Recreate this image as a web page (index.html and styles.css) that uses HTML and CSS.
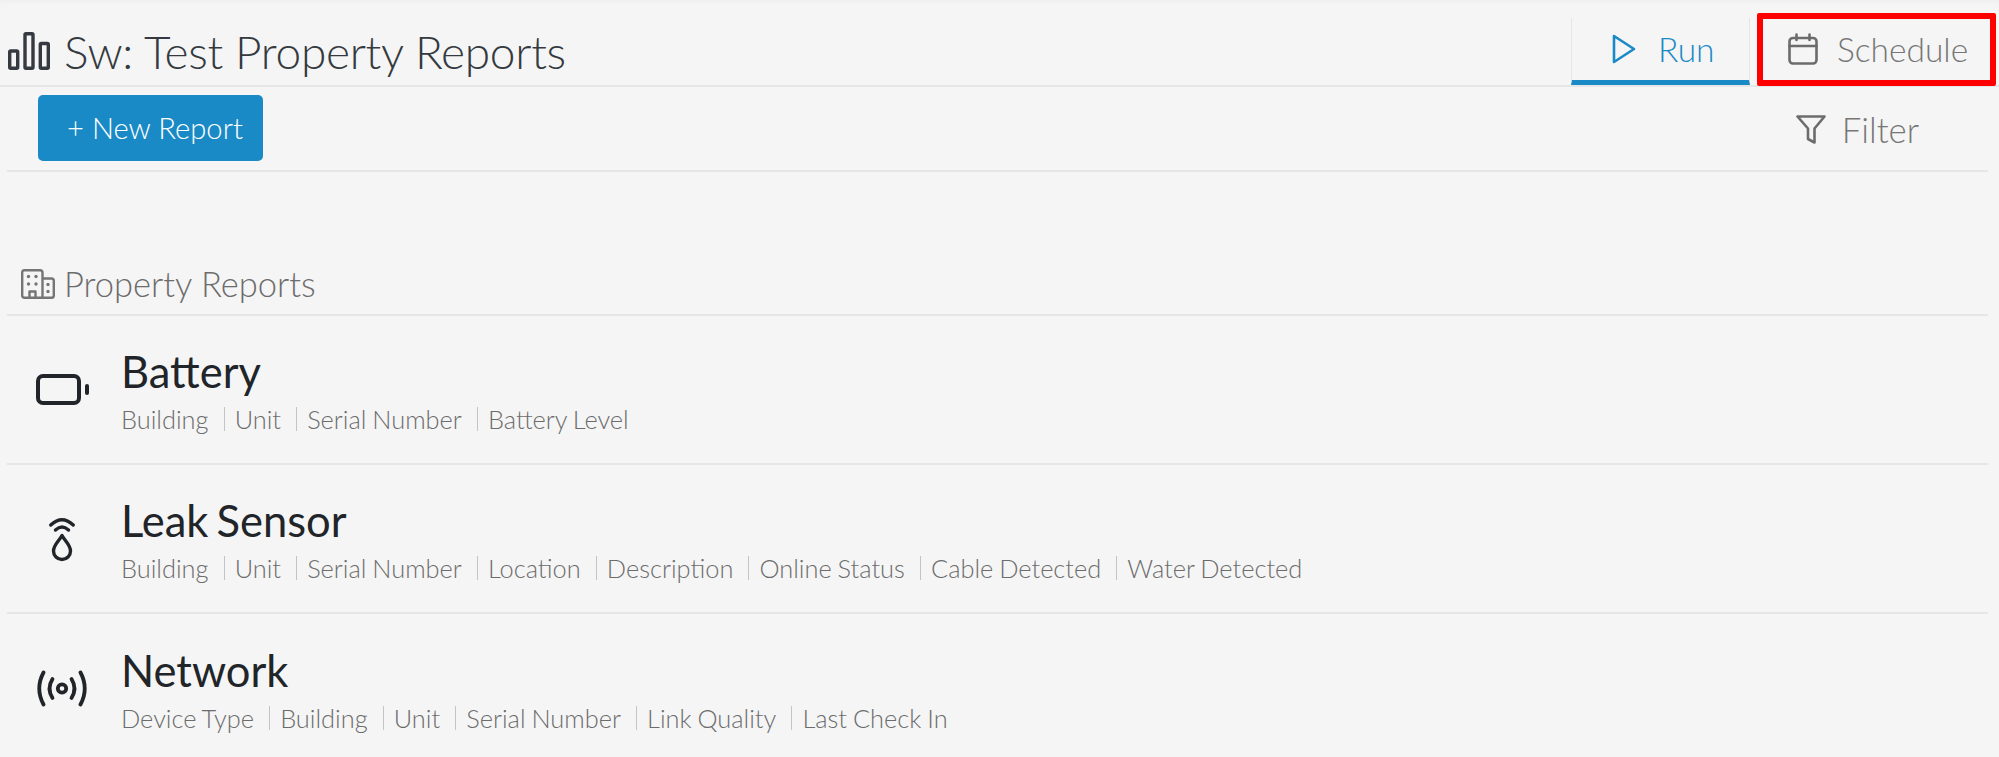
FILE: index.html
```html
<!DOCTYPE html>
<html>
<head>
<meta charset="utf-8">
<title>Sw: Test Property Reports</title>
<link rel="stylesheet" href="styles.css">
</head>
<body>
<div class="header">
  <div class="page-title">
    <svg class="title-icon" viewBox="0 0 42 38" fill="none" stroke="#343a40" stroke-width="3.4" stroke-linejoin="round">
      <rect x="1.7" y="19" width="8" height="17.3" rx="1"/>
      <rect x="17" y="1.7" width="8" height="34.6" rx="1"/>
      <rect x="32.3" y="11.5" width="8" height="24.8" rx="1"/>
    </svg>
    <h1>Sw: Test Property Reports</h1>
  </div>
  <div class="tabs">
    <a class="tab active">
      <svg class="tab-icon run-icon" viewBox="0 0 24 30" fill="none" stroke="#1a8ac6" stroke-width="2.6" stroke-linejoin="round">
        <path d="M2 2 L22 15 L2 28 Z"/>
      </svg>
      Run
    </a>
    <a class="tab schedule">
      <svg class="tab-icon cal-icon" viewBox="0 0 30 32" fill="none" stroke="#6c6c6c" stroke-width="2.6" stroke-linecap="round" stroke-linejoin="round">
        <rect x="1.5" y="5" width="27" height="25.5" rx="3.5"/>
        <path d="M1.5 13 H28.5 M8.5 1.5 V7 M21.5 1.5 V7"/>
      </svg>
      Schedule
      <span class="highlight"></span>
    </a>
  </div>
</div>

<div class="toolbar">
  <button class="new-report">+ New Report</button>
  <a class="filter">
    <svg class="filter-icon" viewBox="0 0 30 29" fill="none" stroke="#6c6c6c" stroke-width="2.6" stroke-linejoin="round">
      <path d="M1.5 1.5 H28.5 L18.5 13.5 V27.5 L12 24 V13.5 Z"/>
    </svg>
    Filter
  </a>
</div>

<div class="section-title">
  <svg class="building-icon" viewBox="0 0 34 30" fill="none" stroke="#757575" stroke-width="2.4" stroke-linejoin="round">
    <path d="M3.5 1.2 H19 Q21.5 1.2 21.5 3.7 V28.8 H3.5 Q1.2 28.8 1.2 26.5 V3.7 Q1.2 1.2 3.5 1.2 Z"/>
    <path d="M21.5 9.5 H30.5 Q32.8 9.5 32.8 12 V26.5 Q32.8 28.8 30.5 28.8 H21.5"/>
    <path d="M8.5 28.8 V22.5 H14.5 V28.8"/>
    <g fill="#757575" stroke="none">
      <circle cx="7.5" cy="7.5" r="1.7"/><circle cx="15" cy="7.5" r="1.7"/>
      <circle cx="7.5" cy="15" r="1.7"/><circle cx="15" cy="15" r="1.7"/>
      <circle cx="27" cy="15.5" r="1.7"/><circle cx="27" cy="22.5" r="1.7"/>
    </g>
  </svg>
  Property Reports
</div>

<div class="report-row">
  <div class="report-icon">
    <svg class="battery-icon" viewBox="0 0 53 31" fill="none" stroke="#212529" stroke-width="4">
      <rect x="2" y="2" width="41" height="27" rx="5"/>
      <path d="M51 12 V19" stroke-linecap="round"/>
    </svg>
  </div>
  <div class="report-text">
    <h3>Battery</h3>
    <div class="fields"><span>Building</span><span>Unit</span><span>Serial Number</span><span>Battery Level</span></div>
  </div>
</div>

<div class="report-row">
  <div class="report-icon">
    <svg class="leak-icon" viewBox="0 0 26 46" fill="none" stroke="#212529" stroke-width="3.4" stroke-linecap="round">
      <path d="M1.8 9 Q13 -1.5 24.2 9"/>
      <path d="M6.5 14 Q13 8 19.5 14"/>
      <path d="M13 19.5 C16 25 21.5 29 21.5 35 A8.5 8.5 0 0 1 4.5 35 C4.5 29 10 25 13 19.5 Z" stroke-linejoin="round"/>
    </svg>
  </div>
  <div class="report-text">
    <h3>Leak Sensor</h3>
    <div class="fields"><span>Building</span><span>Unit</span><span>Serial Number</span><span>Location</span><span>Description</span><span>Online Status</span><span>Cable Detected</span><span>Water Detected</span></div>
  </div>
</div>

<div class="report-row">
  <div class="report-icon">
    <svg class="network-icon" viewBox="0 0 50 37" fill="none" stroke="#212529" stroke-width="3.8" stroke-linecap="round">
      <circle cx="25" cy="18.5" r="4.2"/>
      <path d="M15.5 9 Q9.5 18.5 15.5 28 M34.5 9 Q40.5 18.5 34.5 28"/>
      <path d="M6.5 2.5 Q-2 18.5 6.5 34.5 M43.5 2.5 Q52 18.5 43.5 34.5"/>
    </svg>
  </div>
  <div class="report-text">
    <h3>Network</h3>
    <div class="fields"><span>Device Type</span><span>Building</span><span>Unit</span><span>Serial Number</span><span>Link Quality</span><span>Last Check In</span></div>
  </div>
</div>
</body>
</html>
```

FILE: styles.css
```css
html, body {
  margin: 0;
  padding: 0;
}

body {
  background: #f5f5f5;
  font-family: Lato, "Open Sans", sans-serif;
  color: #212529;
  height: 757px;
  overflow: hidden;
}

.header {
  display: flex;
  justify-content: space-between;
  align-items: flex-end;
  height: 85px;
  border-bottom: 2px solid #e6e6e6;
  padding-left: 8px;
  box-shadow: inset 0 4px 4px -2px #eeeeee;
}

.page-title {
  display: flex;
  align-items: center;
  height: 70px;
  margin-bottom: -2px;
}

.title-icon {
  width: 42px;
  height: 38px;
  margin-right: 14px;
  margin-bottom: 2px;
}

h1 {
  margin: 0;
  font-size: 46px;
  font-weight: 300;
  letter-spacing: -0.3px;
  color: #343a40;
  line-height: 54px;
}

.tabs {
  display: flex;
  height: 67px;
  margin-right: 3px;
}

.tab {
  display: flex;
  align-items: center;
  box-sizing: border-box;
  font-size: 33.5px;
  font-weight: 300;
  position: relative;
}

.tab.active {
  width: 179px;
  padding-left: 40px;
  color: #1a8ac6;
  border-left: 1px solid #e6e6e6;
  border-right: 1px solid #e6e6e6;
  border-bottom: 5px solid #1a8ac6;
  margin-right: 7px;
}

.tab.schedule {
  width: 239px;
  padding-left: 31px;
  padding-bottom: 5px;
  color: #777;
}

.tab-icon {
  flex: none;
}

.run-icon {
  width: 24px;
  height: 30px;
  margin-right: 22px;
}

.cal-icon {
  width: 30px;
  height: 32px;
  margin-right: 19px;
}

.highlight {
  position: absolute;
  left: 0;
  right: 0;
  top: -5px;
  bottom: -1px;
  border: 6px solid #ff0000;
  border-radius: 2px;
}

.toolbar {
  display: flex;
  justify-content: space-between;
  align-items: center;
  height: 85px;
  margin: 0 11px 0 7px;
  padding: 0 69px 0 31px;
  border-bottom: 2px solid #e6e6e6;
  box-sizing: border-box;
}

.new-report {
  width: 225px;
  height: 66px;
  margin-top: -1px;
  background: #1a8ac6;
  color: #fff;
  border: none;
  border-radius: 5px;
  font-family: inherit;
  font-size: 29.2px;
  font-weight: 300;
  padding: 0 0 2px 9px;
}

.filter {
  display: flex;
  align-items: center;
  font-size: 34.8px;
  font-weight: 300;
  color: #777;
  padding-top: 2px;
}

.filter-icon {
  width: 30px;
  height: 29px;
  margin-right: 16px;
}

.section-title {
  display: flex;
  align-items: center;
  height: 61px;
  margin: 83px 11px 0 7px;
  padding: 0 0 2px 14px;
  font-size: 34.5px;
  font-weight: 300;
  color: #6c6c6c;
  border-bottom: 2px solid #e6e6e6;
  box-sizing: border-box;
}

.building-icon {
  width: 34px;
  height: 30px;
  margin-right: 9px;
}

.report-row {
  display: flex;
  align-items: center;
  height: 149px;
  margin: 0 11px 0 7px;
  border-bottom: 2px solid #e6e6e6;
  box-sizing: border-box;
}

.report-row:last-child {
  border-bottom: none;
}

.report-icon {
  flex: none;
  display: flex;
  justify-content: center;
  width: 90px;
  padding-left: 10px;
  margin-right: 14px;
}

.report-text {
  margin-top: 1px;
}

.battery-icon {
  width: 53px;
  height: 31px;
}

.leak-icon {
  width: 26px;
  height: 46px;
}

.network-icon {
  width: 50px;
  height: 37px;
}

h3 {
  margin: 0 0 9px;
  font-size: 43.5px;
  font-weight: 400;
  word-spacing: -3px;
  line-height: 48px;
}

.fields {
  display: flex;
  font-size: 25.4px;
  font-weight: 300;
  word-spacing: -1px;
  color: #6c6c6c;
  line-height: 30px;
}

.fields span {
  display: flex;
  align-items: center;
}

.fields span::after {
  content: "";
  width: 1px;
  height: 24px;
  background: #c4c4c4;
  margin: 0 10.1px 0 15px;
}

.fields span:last-child::after {
  display: none;
}
```
